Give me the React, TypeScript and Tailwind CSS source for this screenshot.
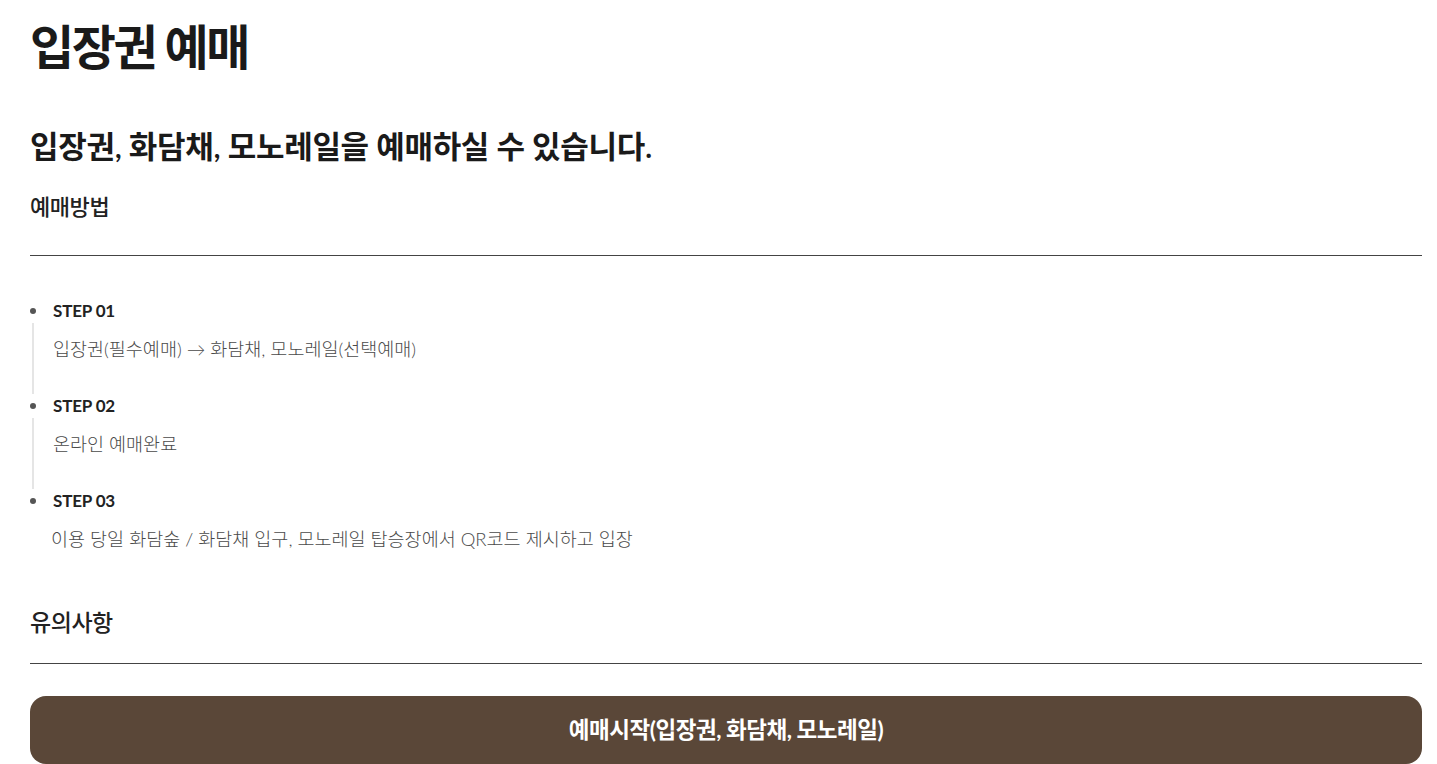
import React from 'react';

const steps = [
    { title: 'STEP 01', desc: '입장권(필수예매) → 화담채, 모노레일(선택예매)' },
    { title: 'STEP 02', desc: '온라인 예매완료' },
    { title: 'STEP 03', desc: '이용 당일 화담숲 / 화담채 입구, 모노레일 탑승장에서 QR코드 제시하고 입장' },
];

const font = { fontFamily: '"Lato", "Noto Sans CJK KR", sans-serif' };

const App: React.FC = () => {
    return (
        <div className="min-h-screen bg-white pl-[30px] pr-[15px] pt-[18px] text-[#222]" style={font}>
            <h1 className="text-[48px] leading-[58px] font-bold tracking-[-0.05em] text-[#1a1a1a]">입장권 예매</h1>

            <p className="mt-[51px] text-[31px] leading-[38px] font-semibold tracking-[-0.01em] text-[#1a1a1a]">
                입장권, 화담채, 모노레일을 예매하실 수 있습니다.
            </p>

            <h2 className="mt-[27px] text-[22px] leading-[30px] font-medium tracking-[-0.02em] text-[#222] pb-[33px] border-b border-[#444]">
                예매방법
            </h2>

            {/* 단계 목록 */}
            <ul className="mt-[43px]">
                {steps.map((s, i) => (
                    <li key={s.title}>
                        <div className="flex items-center h-[24px]">
                            <span className="w-[6px] h-[6px] rounded-full bg-[#555]" />
                            <span className="ml-[17px] text-[17px] font-bold tracking-[-0.01em] text-[#222]">{s.title}</span>
                        </div>
                        <div
                            className={
                                i < steps.length - 1
                                    ? 'ml-[2px] border-l-2 border-[#e5e5e5] pl-[19px] pt-[12px] pb-[31px]'
                                    : 'ml-[2px] pl-[19px] pt-[12px]'
                            }
                        >
                            <p className="text-[18.5px] leading-[28px] font-light text-[#4a4a4a]">{s.desc}</p>
                        </div>
                    </li>
                ))}
            </ul>

            <h2 className="mt-[54px] text-[23px] leading-[30px] font-medium tracking-[-0.02em] text-[#222] pb-[26px] border-b border-[#444]">
                유의사항
            </h2>

            <button className="mt-[32px] w-full h-[68px] rounded-[16px] bg-[#5a4738] text-white text-[22.5px] font-bold tracking-[-0.02em]">
                예매시작(입장권, 화담채, 모노레일)
            </button>
        </div>
    );
};

export default App;
